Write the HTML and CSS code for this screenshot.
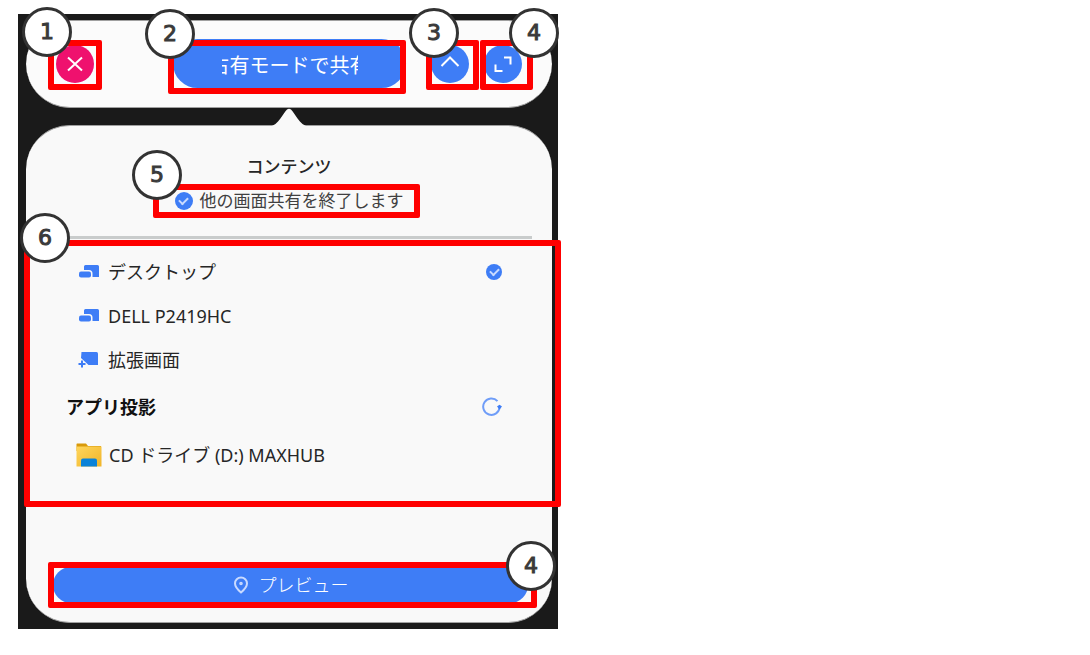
FILE: index.html
```html
<!DOCTYPE html>
<html lang="ja">
<head>
<meta charset="utf-8">
<meta name="viewport" content="width=device-width, initial-scale=1">
<title>画面共有</title>
<link rel="stylesheet" href="styles.css">
</head>
<body>
<main class="figure">
  <section class="toolbar">
    <button class="round round-close" type="button" aria-label="閉じる">
      <svg viewBox="0 0 38 38"><path d="M12 12.500 26 25.500M26 12.500 12 25.500"/></svg>
    </button>
    <button class="mode" type="button"><span class="mode-text">占有モードで共有</span></button>
    <div class="tools">
      <button class="round" type="button" aria-label="折りたたむ">
        <svg viewBox="0 0 38 38"><path d="M10.500 21 19 12.500 27.500 21"/></svg>
      </button>
      <button class="round" type="button" aria-label="全画面">
        <svg viewBox="0 0 38 38"><path d="M20 12.500h6.500v7M18.500 26h-7v-6.500"/></svg>
      </button>
    </div>
  </section>

  <section class="panel">
    <svg class="notch" viewBox="0 0 40 19"><path d="M0 19C10 17 14 5 18 1.500Q20 0 22 1.500C26 5 30 17 40 19Z"/></svg>
    <h1 class="title">コンテンツ</h1>
    <label class="stop">
      <input class="check" type="checkbox" checked>
      <span>他の画面共有を終了します</span>
    </label>
    <hr class="rule">
    <div class="list">
      <label class="row">
        <svg class="icon" viewBox="0 0 22 16"><path d="M7.500 1H19.500Q21 1 21 2.500V13H14.500V9.500Q14.500 6 11 6H6V2.500Q6 1 7.500 1Z"/><rect x="1" y="7.500" width="12" height="6" rx="2"/></svg>
        <span class="name">デスクトップ</span>
        <input class="check" type="radio" name="source" checked>
      </label>
      <label class="row">
        <svg class="icon" viewBox="0 0 22 16"><path d="M7.500 1H19.500Q21 1 21 2.500V13H14.500V9.500Q14.500 6 11 6H6V2.500Q6 1 7.500 1Z"/><rect x="1" y="7.500" width="12" height="6" rx="2"/></svg>
        <span class="name">DELL P2419HC</span>
        <input class="check check-off" type="radio" name="source">
      </label>
      <label class="row">
        <svg class="icon" viewBox="0 0 22 16"><path d="M3.500 0H18.500Q20 0 20 1.500V13H10.500L3 6Z"/><path d="M3 8.500h2v2.500h2.500v2H5v2.500H3V13H.500v-2H3Z"/></svg>
        <span class="name">拡張画面</span>
        <input class="check check-off" type="radio" name="source">
      </label>
      <div class="heading">
        <h2 class="subtitle">アプリ投影</h2>
        <button class="refresh" type="button" aria-label="更新">
          <svg viewBox="0 0 20 20"><path class="arc" d="M15.500 4.200A8.200 8.200 0 1 0 17.600 10"/><path class="tip" d="M15 9.500l2.500-1.800 2.500 1.800-2.500 3Z"/></svg>
        </button>
      </div>
      <div class="row row-app">
        <svg class="folder" viewBox="0 0 26 24">
          <defs><linearGradient id="gold" x1="0" y1="0" x2="1" y2="1"><stop offset="0" stop-color="#ffd65c"/><stop offset="1" stop-color="#f0b429"/></linearGradient></defs>
          <path fill="#d99a0b" d="M1 .500H10L12 3H25V8H.500V1Z"/>
          <rect x=".5" y="3.500" width="25" height="20" fill="url(#gold)"/>
          <path fill="#0a82d8" d="M5 23.500V17.500Q5 15.500 7 15.500H19Q21 15.500 21 17.500V23.500Z"/>
        </svg>
        <span class="name">CD ドライブ (D:) MAXHUB</span>
      </div>
    </div>
    <button class="preview" type="button">
      <svg class="pin" viewBox="0 0 16 18"><path d="M8 16.500C4.500 13.500 2 11 2 7.500a6 6 0 0 1 12 0C14 11 11.500 13.500 8 16.500Z"/><circle cx="8" cy="7.500" r=".8"/></svg>
      <span>プレビュー</span>
    </button>
  </section>

  <div class="frame frame-close"></div>
  <div class="frame frame-mode"></div>
  <div class="frame frame-fold"></div>
  <div class="frame frame-full"></div>
  <div class="frame frame-stop"></div>
  <div class="frame frame-list"></div>
  <div class="frame frame-preview"></div>
  <span class="badge badge-close">1</span>
  <span class="badge badge-mode">2</span>
  <span class="badge badge-fold">3</span>
  <span class="badge badge-full">4</span>
  <span class="badge badge-stop">5</span>
  <span class="badge badge-list">6</span>
  <span class="badge badge-preview">4</span>
</main>
</body>
</html>
```
FILE: styles.css
```css
* { box-sizing: border-box; }

body {
  margin: 0;
  background: #fff;
  color: #262626;
  font: 18px/24px "Noto Sans", "Noto Sans CJK JP", sans-serif;
}

button {
  border: 0;
  padding: 0;
  font: inherit;
  color: #fff;
  background: #3e7df6;
}

svg { display: block; }

.figure {
  position: relative;
  max-width: 540px;
  margin: 14px 18px;
  padding: 6px 6px 6px 8px;
  background: #1a1a1a;
}

/* Top bar */
.toolbar {
  display: flex;
  align-items: center;
  margin-bottom: 17px;
  padding: 18px 30px 19px;
  border: 1px solid #a0a0a0;
  border-width: 1px 0;
  border-radius: 44px;
  background: #fbfbfb;
}

.round {
  flex: none;
  width: 38px;
  height: 38px;
  border-radius: 50%;
}

.round svg {
  fill: none;
  stroke: #fff;
  stroke-width: 2;
}

.round-close { background: #ef116e; }

.mode {
  flex: 1;
  display: flex;
  justify-content: center;
  align-items: center;
  height: 49px;
  margin: 0 25px 0 79px;
  padding-top: 5px;
  border-radius: 25px;
}

.mode-text {
  display: flex;
  justify-content: center;
  width: 136px;
  overflow: hidden;
  white-space: nowrap;
  font-size: 20px;
}

.tools {
  display: flex;
  gap: 15px;
}

/* Content panel */
.panel {
  position: relative;
  display: flex;
  flex-direction: column;
  padding: 29px 20px 19px;
  border: 1px solid #a0a0a0;
  border-width: 1px 0;
  border-radius: 44px;
  background: #f9f9f9;
}

.notch {
  position: absolute;
  left: 50%;
  bottom: 100%;
  width: 40px;
  margin: 0 0 -1px -20px;
  fill: #f9f9f9;
}

.title {
  margin: 0 0 10px;
  font-size: 17px;
  font-weight: 500;
  line-height: 24px;
  text-align: center;
}

.stop {
  display: flex;
  justify-content: center;
  align-items: center;
  gap: 7px;
  font-size: 17px;
  color: #404040;
}

.rule {
  width: 100%;
  height: 3px;
  margin: 23px 0 11px;
  border: 0;
  background: #c9cccc;
}

.check {
  appearance: none;
  display: grid;
  place-items: center;
  flex: none;
  width: 18px;
  height: 18px;
  margin: 0;
  border-radius: 50%;
  background: #3e7df6;
}

.check::after {
  content: "";
  width: 7px;
  height: 4px;
  margin-bottom: 2px;
  border: solid #c9daff;
  border-width: 0 0 2px 2px;
  transform: rotate(-45deg);
}

.check-off { visibility: hidden; }

.list { padding: 0 30px 0 20px; }

.row {
  display: flex;
  align-items: center;
  gap: 8px;
  height: 44px;
  padding-left: 12px;
}

.row .check {
  width: 16px;
  height: 16px;
}

.row-app {
  gap: 7px;
  height: 46px;
  padding-left: 10px;
}

.name { flex: 1; }

.icon {
  width: 22px;
  fill: #3e7df6;
}

.folder { width: 26px; }

.heading {
  display: flex;
  justify-content: space-between;
  align-items: center;
  height: 50px;
}

.subtitle {
  margin: 0;
  font-size: 18px;
  font-weight: 700;
  line-height: 24px;
  color: #111;
}

.refresh {
  width: 20px;
  background: none;
}

.arc {
  fill: none;
  stroke: #6f9df8;
  stroke-width: 2;
}

.tip { fill: #3e7df6; }

.preview {
  display: flex;
  justify-content: center;
  align-items: center;
  gap: 10px;
  height: 36px;
  margin: 89px 4px 0 7px;
  border-radius: 18px;
  font-weight: 300;
}

.pin {
  width: 16px;
  fill: none;
  stroke: #c9daff;
  stroke-width: 2;
}

/* Callouts laid over the panel */
.frame {
  position: absolute;
  border: 6px solid #f00;
  border-radius: 2px;
  pointer-events: none;
}

.frame-close { left: 30px; top: 26px; width: 54px; height: 50px; }
.frame-mode { left: 150px; top: 26px; width: 238px; height: 54px; }
.frame-fold { left: 408px; top: 26px; width: 53px; height: 50px; }
.frame-full { left: 462px; top: 26px; width: 53px; height: 50px; }
.frame-stop { left: 135px; top: 170px; width: 267px; height: 34px; }
.frame-list { left: 6px; top: 226px; width: 537px; height: 267px; }
.frame-preview { left: 30px; top: 548px; width: 489px; height: 46px; }

.badge {
  position: absolute;
  display: grid;
  place-items: center;
  width: 50px;
  height: 50px;
  border: 3px solid #333;
  border-radius: 50%;
  background: #fff;
  color: #3a3a3a;
  font: 22px/28px "DejaVu Sans", sans-serif;
  -webkit-text-stroke: 1px #3a3a3a;
}

.badge-close { left: 4px; top: -7px; }
.badge-mode { left: 127px; top: -5px; }
.badge-fold { left: 391px; top: -6px; }
.badge-full { left: 491px; top: -6px; }
.badge-stop { left: 114px; top: 136px; }
.badge-list { left: 2px; top: 199px; }
.badge-preview { left: 488px; top: 527px; }
```
